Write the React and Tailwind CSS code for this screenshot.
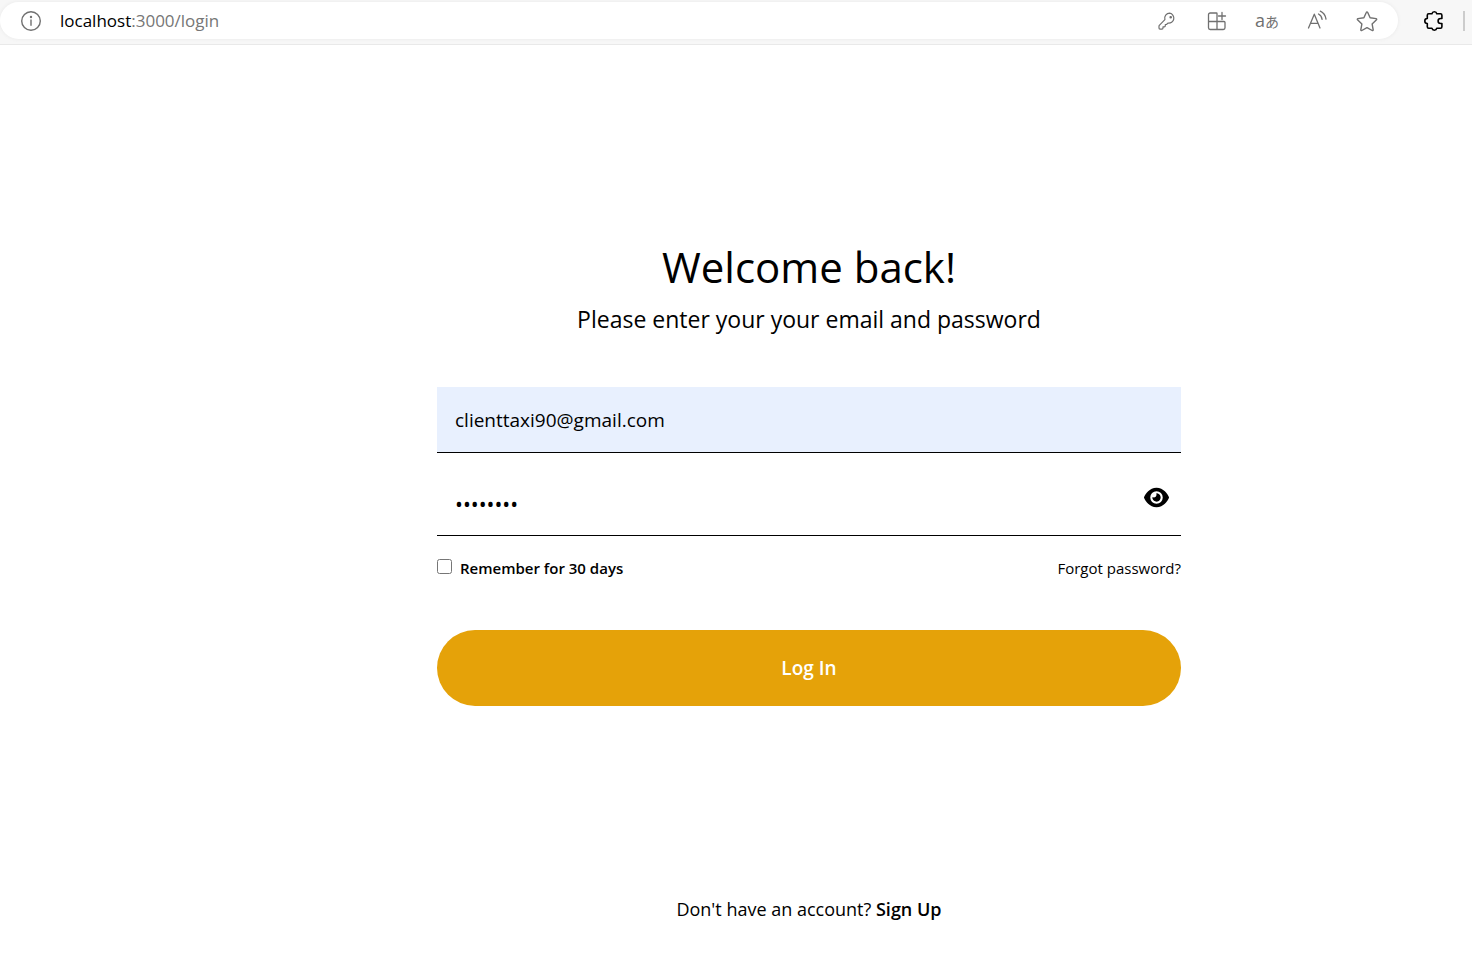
import { FaEye } from 'react-icons/fa6';

const icon = {
  fill: 'none',
  stroke: 'currentColor',
  strokeLinecap: 'round',
  strokeLinejoin: 'round',
  'aria-hidden': true,
};

function InfoIcon() {
  return (
    <svg {...icon} width="22" height="22" viewBox="0 0 22 22" strokeWidth="1.4">
      <circle cx="11" cy="11" r="9.3" />
      <path d="M11 10v5.3" />
      <circle cx="11" cy="7" r=".5" fill="currentColor" />
    </svg>
  );
}

function KeyIcon() {
  return (
    <svg {...icon} width="20" height="20" viewBox="0 0 20 20" strokeWidth="1.2">
      <path d="M12.7 2.2a5 5 0 0 0-4.8 6.4L2.3 14.300a1 1 0 0 0-.3.7v2.100c0 .6.4 1 1 1h2c.6 0 1-.4 1-1v-1.300h1.300c.6 0 1-.4 1-1v-1.300h1.200l1.400-1.400a5 5 0 1 0 1.800-9.900Z" />
      <circle cx="13.700" cy="6.300" r=".7" fill="currentColor" />
    </svg>
  );
}

function AppsIcon() {
  return (
    <svg {...icon} width="20" height="20" viewBox="0 0 20 20" strokeWidth="1.3">
      <path d="M9.500 2H3.200C2.200 2 1.500 2.700 1.500 3.700v13.100c0 .9.700 1.700 1.700 1.700h13.100c1 0 1.700-.8 1.700-1.700v-5.300c0-.6-.4-1-1-1H1.500M9.500 2c.3 0 .5.200.5.500v16M15 1.500v7M11.500 5h7" />
    </svg>
  );
}

function ReadAloudIcon() {
  return (
    <svg {...icon} width="22" height="22" viewBox="0 0 22 22" strokeWidth="1.3">
      <path d="M2.500 18 8.300 4.200 14 18M4.400 13.300h7.800" />
      <path d="M12.500 4c2 1 3.300 2.900 3.600 5.300M14.300 1.200c3.300 1.500 5.200 4.300 5.700 8" />
    </svg>
  );
}

function StarIcon() {
  return (
    <svg {...icon} width="22" height="22" viewBox="0 0 22 22" strokeWidth="1.4">
      <path d="M10.400 2.300c.2-.5.9-.5 1.200 0l2.500 5.500 6 .8c.6.1.8.8.4 1.200l-4.400 4.100 1.100 5.900c.1.6-.5 1-1 .7L11 17.600l-5.200 2.900c-.5.3-1.100-.1-1-.7l1.100-5.900L1.500 9.800c-.4-.4-.2-1.100.4-1.200l6-.8Z" />
    </svg>
  );
}

function PuzzleIcon() {
  return (
    <svg {...icon} width="22" height="22" viewBox="0 0 22 22" strokeWidth="1.6">
      <path d="M5.700 3.800h3.200a2.500 2.500 0 0 1 4.900 0h3.700c.8 0 1.400.6 1.400 1.400v3.300h-1.300a2.500 2.500 0 0 0 0 5h1.300v3.300c0 .8-.6 1.400-1.400 1.400h-3.700a2.500 2.500 0 0 1-4.900 0H5.700c-.8 0-1.400-.6-1.400-1.400v-3.300a2.500 2.500 0 0 1 0-5V5.200c0-.8.6-1.400 1.400-1.400Z" />
    </svg>
  );
}

function AddressBar() {
  return (
    <header className="flex h-[45px] items-start border-b border-[#e9e9e9] bg-[#f7f7f7] pt-[2px]">
      <div className="flex h-[37px] flex-1 items-center rounded-full bg-white pl-5 pr-5 text-[#707070] shadow-[0_0_3px_1px_#eeeeee]">
        <button type="button" aria-label="View site information" className="mr-[18px]">
          <InfoIcon />
        </button>
        <p className="flex-1 text-[17px] leading-6 text-[#767676]">
          <span className="text-black">localhost</span>:3000/login
        </p>
        <div className="flex items-center gap-7">
          <button type="button" aria-label="Saved passwords" className="flex w-[22px] justify-center">
            <KeyIcon />
          </button>
          <button type="button" aria-label="Install app" className="flex w-[22px] justify-center">
            <AppsIcon />
          </button>
          <button
            type="button"
            aria-label="Translate"
            className="flex w-[22px] items-baseline justify-center leading-5"
          >
            <span className="text-lg leading-5">a</span>
            <span className="font-['Noto_Sans_CJK_JP',sans-serif] text-sm leading-5">あ</span>
          </button>
          <button type="button" aria-label="Read aloud" className="flex w-[22px] justify-center">
            <ReadAloudIcon />
          </button>
          <button type="button" aria-label="Add to favorites" className="flex w-[22px] justify-center">
            <StarIcon />
          </button>
        </div>
      </div>
      <div className="flex h-[37px] w-[74px] items-center justify-end gap-[18px] pr-[7px]">
        <button type="button" aria-label="Extensions" className="text-black">
          <PuzzleIcon />
        </button>
        <span className="h-5 w-[2px] bg-[#cccccc]" />
      </div>
    </header>
  );
}

export default function App() {
  return (
    <div className="min-h-screen bg-white font-['Open_Sans','Noto_Sans',sans-serif] text-black">
      <AddressBar />
      <main className="flex flex-col items-center pb-9 pl-[146px] pt-[190px]">
        <div className="flex w-full max-w-[744px] flex-col">
          <h1 className="text-center text-[42px] leading-[64px]">Welcome back!</h1>
          <p className="text-center text-[23px] leading-10">Please enter your your email and password</p>

          <form className="mt-12 flex flex-col" onSubmit={(e) => e.preventDefault()}>
            <input
              type="email"
              aria-label="Email"
              defaultValue="clienttaxi90@gmail.com"
              className="h-[66px] w-full border-b border-black bg-[#e8f0fe] px-[18px] text-[19px] outline-none"
            />
            <div className="relative mt-[17px]">
              <input
                type="password"
                aria-label="Password"
                defaultValue="password"
                className="h-[66px] w-full border-b border-black bg-white px-[18px] pt-[2px] text-[21px] outline-none"
              />
              <button type="button" aria-label="Show password" className="absolute right-3 top-[15px]">
                <FaEye size={25} />
              </button>
            </div>

            <div className="mt-5 flex items-center justify-between text-[15px] leading-6">
              <div className="flex items-start gap-2">
                <input id="remember" type="checkbox" className="mt-[3px] size-[15px]" />
                <label htmlFor="remember" className="font-semibold">
                  Remember for 30 days
                </label>
              </div>
              <a href="#forgot">Forgot password?</a>
            </div>

            <button
              type="submit"
              className="mt-[50px] h-[76px] rounded-full bg-[#e5a209] text-[19px] font-semibold text-white"
            >
              Log In
            </button>
          </form>

          <p className="mt-[189px] text-center text-lg leading-7">
            Don't have an account?{' '}
            <a href="#signup" className="font-semibold">
              Sign Up
            </a>
          </p>
        </div>
      </main>
    </div>
  );
}
